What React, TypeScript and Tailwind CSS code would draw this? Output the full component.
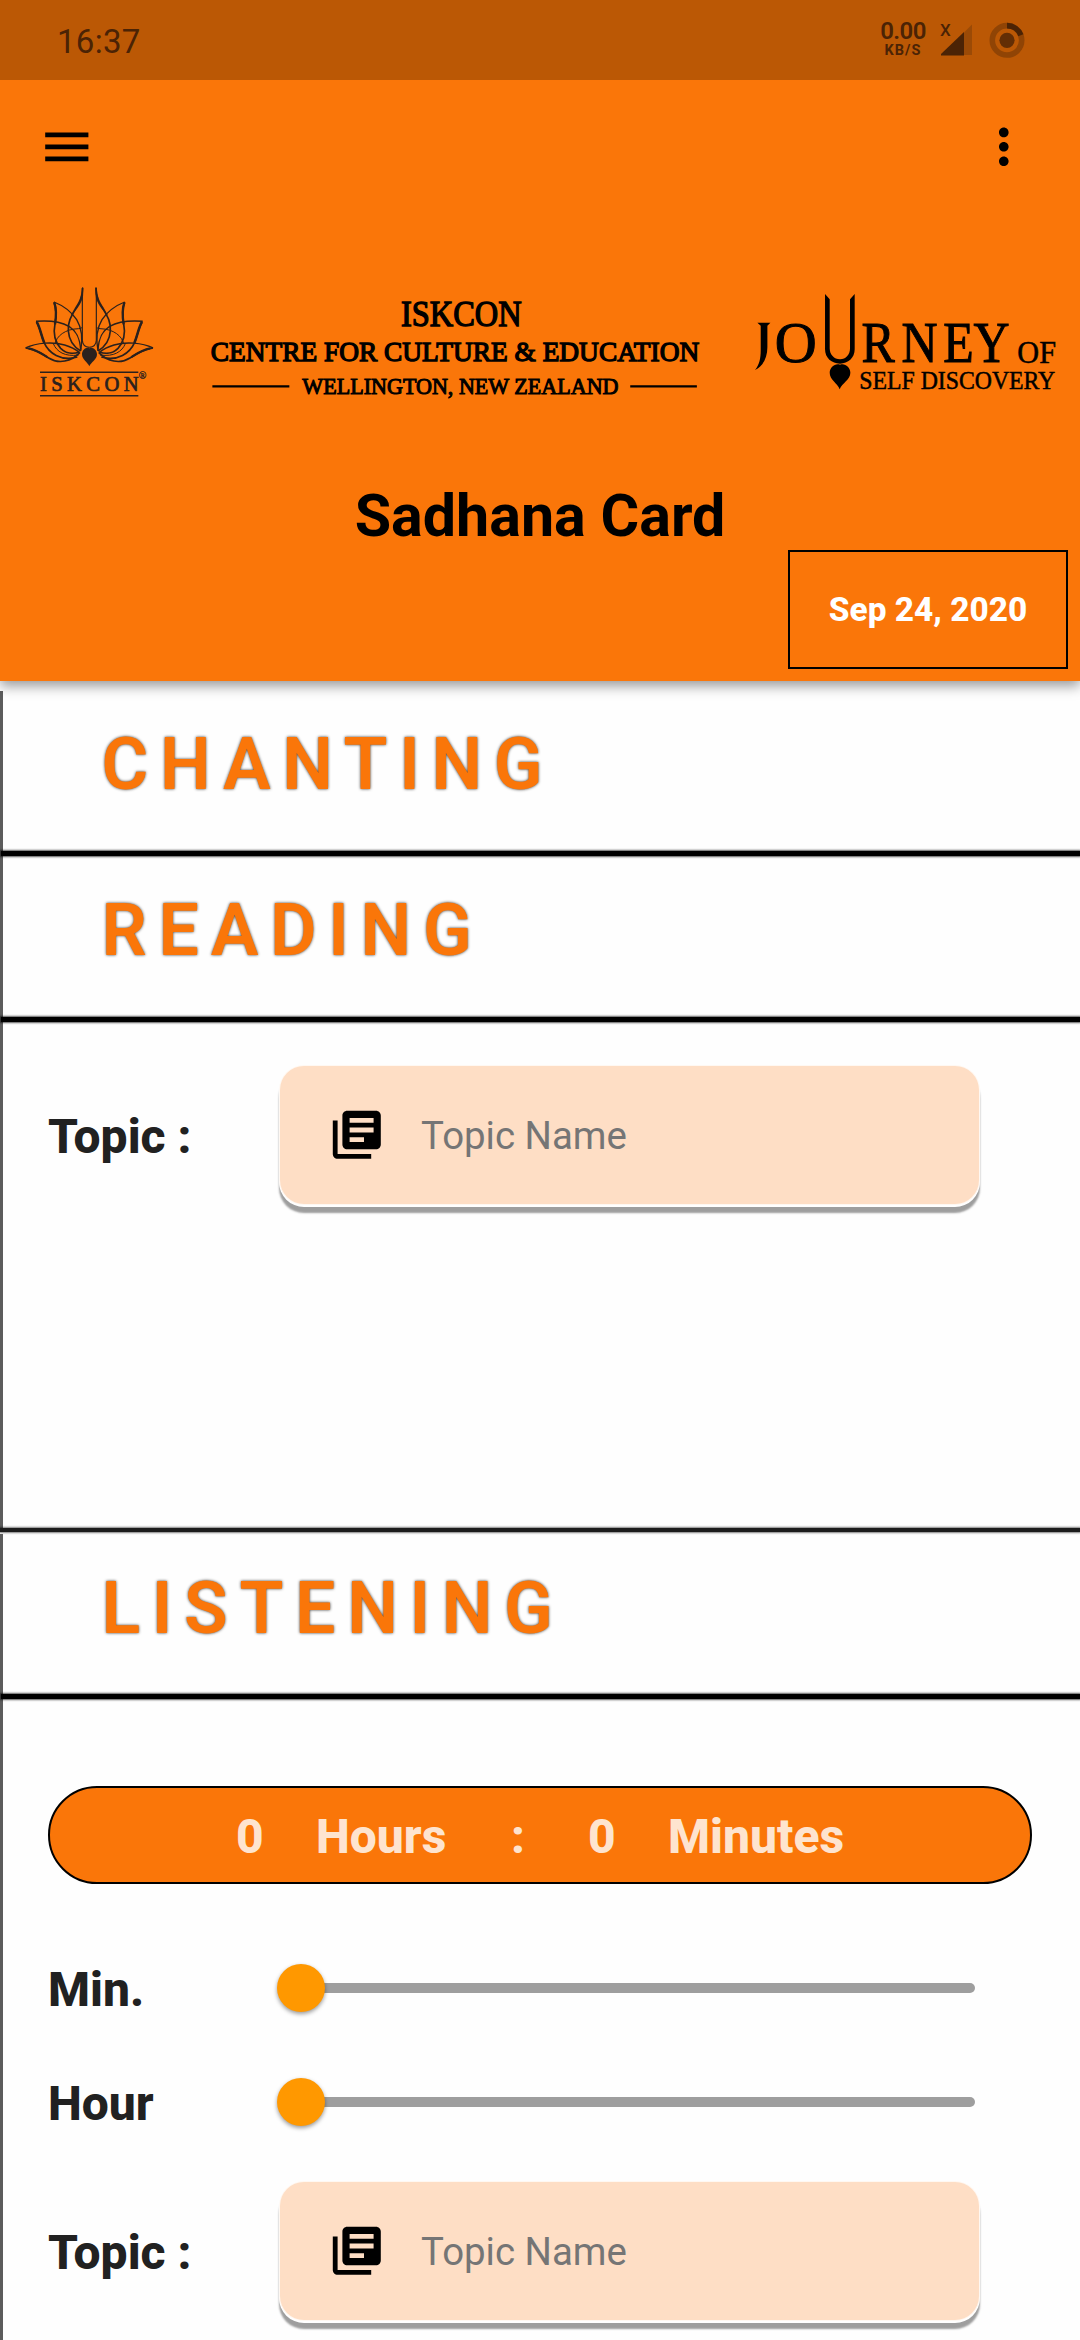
import React from "react";
import { MdLibraryBooks, MdMenu, MdMoreVert } from "react-icons/md";

const SERIF = '"Liberation Serif", serif';

function StatusBar() {
  return (
    <div className="flex h-[80px] items-start bg-[#bb5805] text-[#4b2305]">
      <span className="ml-[57px] mt-[22px] text-[33px] leading-[39px] tracking-[0.3px]">16:37</span>
      <div className="ml-auto mt-[19px] flex w-[46px] flex-col items-center">
        <span className="text-[24px] font-semibold leading-[24px] tracking-[-0.6px]">0.00</span>
        <span className="text-[14.5px] font-bold leading-[15px] tracking-[1.1px]">KB/S</span>
      </div>
      <svg className="ml-[13px] mt-[20px]" width="34" height="38" viewBox="938 20 34 38">
        <text x="939" y="36" fontSize="17" fontWeight="500" fill="#4b2305">X</text>
        <path d="M963 32.5 971 24.5V55H963Z" fill="#9b4a06" />
        <path d="M940 55.5V54L963 32V55.5Z" fill="#4b2305" />
      </svg>
      <svg className="ml-[16px] mr-[55px] mt-[22px]" width="36" height="36" viewBox="0 0 36 36" fill="none">
        <circle cx="18" cy="18.3" r="14.7" stroke="#904405" strokeWidth="5.6" />
        <path d="M18 3.6A14.7 14.7 0 0 1 31.8 13.2" stroke="#4b2305" strokeWidth="5.6" />
        <circle cx="18" cy="18.3" r="7.6" fill="#632e05" />
      </svg>
    </div>
  );
}

function LotusHalf() {
  return (
    <g fill="none" stroke="#2a211e" strokeLinejoin="miter">
      <path d="M247 55V212Q248 232 268 233" strokeWidth="3.500" />
      <path d="M248 55C247 85 240 98 228 116C212 142 203 158 205 184C207 212 222 232 242 244" strokeWidth="5" />
      <path d="M248 52C245 82 238 96 226 114L214 136L231 116C244 98 249 85 249 62Z" fill="#2a211e" strokeWidth="1.500" />
      <path d="M162 97C171 122 169 140 165 162C159 192 162 214 182 236C198 252 220 254 238 247" strokeWidth="5" />
      <path d="M163 99C171 122 169 140 165 164" strokeWidth="7" />
      <path d="M162 97C190 108 214 126 230 150C246 176 249 205 242 244" strokeWidth="4" />
      <path d="M109 156C121 176 123 196 132 218C146 250 182 276 232 262" strokeWidth="5" />
      <path d="M111 158C121 176 123 196 133 220" strokeWidth="7.500" />
      <path d="M108 155C145 152 180 155 207 170C232 186 240 208 242 240" strokeWidth="4.500" />
      <path d="M77 235C110 219 158 215 194 226C214 232 228 240 238 248" strokeWidth="4.500" />
      <path d="M77 235C108 240 126 252 146 265C176 284 214 276 240 248" strokeWidth="5" />
      <path d="M86 236C108 240 126 252 142 262" strokeWidth="6.500" />
      <path d="M165 222C170 200 194 178 236 177C240 176 244 176 246 174" strokeWidth="3" />
      <path d="M160 222C170 246 194 262 236 256" strokeWidth="3" />
    </g>
  );
}

function IskconLogo() {
  return (
    <svg width="140" height="120" viewBox="60 40 420 360" className="shrink-0">
      <LotusHalf />
      <g transform="translate(536 0) scale(-1 1)">
        <LotusHalf />
      </g>
      <path d="M268 236C276 230 291 240 291 254C291 270 273 278 268 290C263 278 246 270 246 254C246 240 260 230 268 236Z" fill="#2a211e" />
      <path d="M120 308H415M120 378.500H415" stroke="#2a211e" strokeWidth="4.500" />
      <text x="120" y="364" fontSize="62" fontFamily={SERIF} textLength="296" lengthAdjust="spacing" fill="#2a211e" stroke="#2a211e" strokeWidth="2">ISKCON</text>
      <text x="416" y="328" fontSize="30" fontFamily={SERIF} fill="#2a211e" stroke="#2a211e" strokeWidth="1">®</text>
    </svg>
  );
}

function CentreLogo() {
  return (
    <svg width="496.600" height="103.300" viewBox="20 50 1490 310" className="shrink-0 overflow-visible" fontFamily={SERIF} fill="#000" stroke="#000" strokeWidth="4">
      <text x="602" y="139" fontSize="105" textLength="362" lengthAdjust="spacingAndGlyphs">ISKCON</text>
      <text x="31" y="245" fontSize="85" textLength="1466" lengthAdjust="spacingAndGlyphs">CENTRE FOR CULTURE &amp; EDUCATION</text>
      <text x="306" y="345" fontSize="68" strokeWidth="3" textLength="949" lengthAdjust="spacingAndGlyphs">WELLINGTON, NEW ZEALAND</text>
      <path d="M36 321H267M1290 321H1490" strokeWidth="7" />
    </svg>
  );
}

function JourneyLogo() {
  return (
    <svg width="310" height="103.300" viewBox="30 60 930 310" className="shrink-0 overflow-visible" fontFamily={SERIF}>
      <path d="M52 158H91L82 167V232C82 264 68 290 45 300C58 284 62 266 62 240V167Z" />
      <g stroke="#000" strokeWidth="3">
        <text x="104" y="276" fontSize="173" textLength="126" lengthAdjust="spacingAndGlyphs">O</text>
        <text transform="scale(0.88 1)" x="414 551 693 796" y="275" fontSize="170">RNEY</text>
        <text x="832" y="278" fontSize="92" strokeWidth="1.500" textLength="116" lengthAdjust="spacingAndGlyphs">OF</text>
        <text x="358" y="356" fontSize="76" strokeWidth="1.500" textLength="588" lengthAdjust="spacingAndGlyphs">SELF DISCOVERY</text>
      </g>
      <path d="M255 72 269 88V235C269 254 282 268 300 268C318 268 330 254 330 235V88L344 72V238C344 264 324 281 300 281C275 281 255 264 255 238Z" />
      <path d="M300 284C314 278 331 292 331 308C331 330 306 338 299 358C292 338 269 330 269 308C269 292 286 278 300 284Z" />
    </svg>
  );
}

function Header() {
  return (
    <header className="relative z-10 flex h-[681px] shrink-0 flex-col bg-[#fa7609] shadow-[0_5px_12px_rgba(0,0,0,0.4)]">
      <StatusBar />
      <div className="flex h-[133px] items-center justify-between pl-[38px] pr-[47px] text-black">
        <MdMenu size={57.6} />
        <MdMoreVert size={57.6} />
      </div>
      <div className="mt-[70px] flex h-[120px] items-start pl-[20px]">
        <IskconLogo />
        <div className="ml-[46.700px] mt-[13.300px]">
          <CentreLogo />
        </div>
        <div className="ml-[46.700px] mt-[6.700px]">
          <JourneyLogo />
        </div>
      </div>
      <h1 className="mt-[83px] text-center text-[59.2px] font-bold leading-[60px] text-black">Sadhana Card</h1>
      <div className="mr-[12px] mt-[4px] flex h-[119px] w-[280px] items-center justify-center self-end border-[2.400px] border-black pt-[2px] text-[33.400px] font-extrabold text-white">
        Sep 24, 2020
      </div>
    </header>
  );
}

function SectionTitle({ children, className }: { children: string; className: string }) {
  return (
    <div className={`flex shrink-0 items-center pl-[98.500px] ${className}`}>
      <h2 className="text-[71.5px] font-semibold leading-[84px] tracking-[11.7px] text-[#fa7609] [text-shadow:0_0_3px_#333]">{children}</h2>
    </div>
  );
}

function Rule() {
  return <div className="-ml-[2px] h-[5px] shrink-0 bg-black shadow-[0_0_2px_1px_rgba(0,0,0,0.65)]" />;
}

function TopicRow() {
  return (
    <div className="flex h-[138px] items-center">
      <span className="w-[231.500px] pt-[3px] text-[48px] font-extrabold text-[#212121]">Topic :</span>
      <div className="flex h-[138px] w-[699px] items-center rounded-[24px] bg-[#fedec5] pl-[48px] shadow-[0_0_0_1px_#fff8f2,0_2px_0_1px_#fff,0_8px_2px_1px_#9e9e9e]">
        <MdLibraryBooks size={57.6} className="text-black" />
        <span className="ml-[36px] pt-[1px] text-[38.4px] text-[#757575]">Topic Name</span>
      </div>
    </div>
  );
}

function SliderRow({ label }: { label: string }) {
  return (
    <div className="flex h-[114px] items-center">
      <span className="w-[229px] pt-[3px] text-[48px] font-extrabold text-[#212121]">{label}</span>
      <div className="flex w-[698px] items-center">
        <div className="z-[1] size-[48px] shrink-0 rounded-full bg-[#ff9800] shadow-[0_2px_4px_rgba(0,0,0,0.4)]" />
        <div className="-ml-[4px] h-[9.600px] grow rounded-r-full bg-[#9e9e9e]" />
      </div>
    </div>
  );
}

export default function App() {
  return (
    <div className="flex h-[2340px] w-[1080px] flex-col overflow-hidden bg-[#fefefe] font-[Roboto,sans-serif]">
      <Header />
      <div className="mt-[10px] flex h-[841px] shrink-0 flex-col border-l-[3px] border-[#5c5c5c]">
        <SectionTitle className="h-[160px] pb-[12px]">CHANTING</SectionTitle>
        <Rule />
        <SectionTitle className="h-[161px] pb-[12px]">READING</SectionTitle>
        <Rule />
        <div className="pl-[45px] pt-[44px]">
          <TopicRow />
        </div>
      </div>
      <div className="-mt-[4px] h-[4px] shrink-0 bg-[#1c1c1c] shadow-[0_0_2px_1px_rgba(0,0,0,0.5)]" />
      <div className="mt-[2px] flex grow flex-col border-l-[3px] border-[#5c5c5c]">
        <SectionTitle className="h-[160px] pb-[11px]">LISTENING</SectionTitle>
        <Rule />
        <div className="pl-[45px] pt-[87px]">
          <div className="flex h-[98px] w-[984px] items-center rounded-full border-[2.400px] border-black bg-[#fa7609] pl-[186px] pt-[3px] text-[48px] font-extrabold text-[#fee4cf]">
            <span className="w-[80px]">0</span>
            <span className="w-[195px]">Hours</span>
            <span className="w-[77px]">:</span>
            <span className="w-[80px]">0</span>
            <span>Minutes</span>
          </div>
          <div className="mt-[47px]">
            <SliderRow label="Min." />
            <SliderRow label="Hour" />
          </div>
          <div className="mt-[23px]">
            <TopicRow />
          </div>
        </div>
      </div>
    </div>
  );
}
